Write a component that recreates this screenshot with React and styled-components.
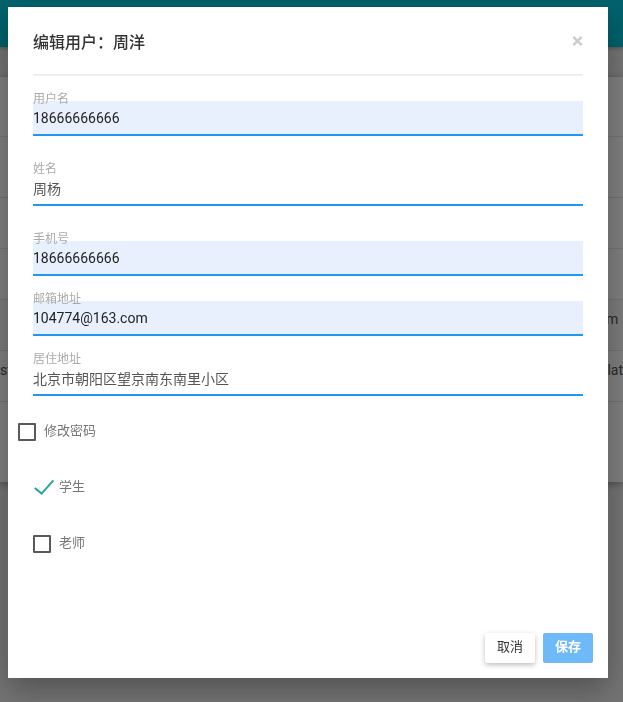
import React, { useState } from "react";
import styled, { createGlobalStyle } from "styled-components";

const GlobalStyle = createGlobalStyle`
  *, *::before, *::after { box-sizing: border-box; }
  body {
    margin: 0;
    font-family: Roboto, "Noto Sans CJK SC", sans-serif;
    font-size: 14px;
    color: #555;
  }
  button, input { font: inherit; }
`;

const Page = styled.div`
  min-height: 100vh;
  background: #e9e9e9;
  overflow: hidden;
`;

const TopBar = styled.header`
  height: 47px;
  background: #00c3d8;
  box-shadow: 0 1px 4px rgba(0, 0, 0, 0.3);
`;

const Card = styled.main`
  margin-top: 30px;
  padding-bottom: 80px;
  background: #fff;
  box-shadow: 0 2px 8px rgba(0, 0, 0, 0.35);
`;

const UserTable = styled.table`
  width: 100%;
  table-layout: fixed;
  border-collapse: separate;
  border-spacing: 0;
  color: #555;
`;

const TableRow = styled.tr`
  height: ${(p) => p.$height || 51}px;
  background: ${(p) => (p.$striped ? "#f9f9f9" : "transparent")};
`;

const TableCell = styled.td`
  padding: 0 0 12px;
  overflow: hidden;
  white-space: nowrap;
  text-align: ${(p) => p.$align || "left"};
  border-bottom: 1px solid #e6e6e6;
`;

const EdgeColumn = styled.col`
  width: 17px;
`;

const Backdrop = styled.div`
  position: fixed;
  inset: 0;
  padding: 7px 15px 24px 8px;
  overflow: auto;
  background: rgba(0, 0, 0, 0.5);
`;

const Dialog = styled.form`
  display: flex;
  flex-direction: column;
  min-height: 100%;
  background: #fff;
  box-shadow: 0 12px 30px rgba(0, 0, 0, 0.3);
`;

const DialogHeader = styled.header`
  display: flex;
  align-items: center;
  justify-content: space-between;
  margin: 0 25px;
  height: 69px;
  border-bottom: 2px solid #eee;
`;

const Title = styled.h1`
  margin: 0;
  padding-top: 4px;
  font-size: 16px;
  line-height: 24px;
  font-weight: 500;
  color: #333;
`;

const CloseButton = styled.button`
  display: grid;
  width: 12px;
  height: 12px;
  padding: 0;
  border: 0;
  background: none;
  color: #ccc;
  place-items: center;
`;

const Fields = styled.div`
  display: flex;
  flex-direction: column;
  margin: 15px 25px 0;
`;

const Field = styled.div`
  display: flex;
  flex-direction: column;
  margin-bottom: ${(p) => (p.$compact ? 15 : 25)}px;
`;

const FieldLabel = styled.label`
  z-index: 1;
  height: 10px;
  font-size: 12px;
  line-height: 16px;
  color: #aaa;
`;

const TextInput = styled.input`
  width: 100%;
  height: 35px;
  padding: 0;
  border: 0;
  border-bottom: 2px solid #2196f3;
  border-radius: 0;
  outline: 0;
  background: ${(p) => (p.$filled ? "#e8f0fe" : "transparent")};
  color: ${(p) => (p.$filled ? "#222" : "#555")};
`;

const CheckList = styled.div`
  display: flex;
  flex-direction: column;
  gap: 38px;
  margin-top: 12px;
`;

const CheckLabel = styled.label`
  display: flex;
  align-items: center;
  gap: 8px;
  height: 18px;
  margin-left: ${(p) => (p.$nested ? 25 : 10)}px;
  font-size: 13px;
  color: #757575;
`;

const CheckText = styled.span`
  padding-bottom: 2px;
  line-height: 18px;
`;

const CheckMark = styled.span`
  display: grid;
  width: 18px;
  height: 18px;

  > * { grid-area: 1 / 1; }
`;

const CheckInput = styled.input`
  appearance: none;
  width: 18px;
  height: 18px;
  margin: 0;
  border: 2px solid #5a5a5a;
  border-radius: 1px;

  &:checked { border-color: transparent; }
`;

const Tick = styled.svg`
  width: 22px;
  height: 18px;
  pointer-events: none;
`;

const DialogFooter = styled.footer`
  display: flex;
  justify-content: flex-end;
  gap: 8px;
  margin-top: auto;
  padding: 15px;
`;

const ActionButton = styled.button`
  height: 30px;
  padding: 0 12px 2px;
  border: 0;
  border-radius: 2px;
  font-size: 13px;
  line-height: 28px;
  font-weight: ${(p) => (p.$primary ? 700 : 400)};
  color: ${(p) => (p.$primary ? "#fff" : "#333")};
  background: ${(p) => (p.$primary ? "#6eb9f7" : "#fff")};
  box-shadow: ${(p) => (p.$primary ? "none" : "0 2px 5px rgba(0, 0, 0, 0.26)")};
`;

const tableRows = [
  { height: 60 },
  { height: 61 },
  {},
  {},
  { right: "m", striped: true },
  { left: "st", right: "lat", align: "right" },
];

const fields = [
  { id: "username", label: "用户名", value: "18666666666", filled: true },
  { id: "name", label: "姓名", value: "周杨" },
  { id: "phone", label: "手机号", value: "18666666666", filled: true, compact: true },
  { id: "email", label: "邮箱地址", value: "104774@163.com", filled: true, compact: true },
  { id: "address", label: "居住地址", value: "北京市朝阳区望京南东南里小区", compact: true },
];

function CheckOption({ label, nested, initial = false }) {
  const [checked, setChecked] = useState(initial);
  return (
    <CheckLabel $nested={nested}>
      <CheckMark>
        <CheckInput
          type="checkbox"
          checked={checked}
          onChange={(e) => setChecked(e.target.checked)}
        />
        {checked && (
          <Tick viewBox="0 0 22 18" fill="none" stroke="#26a69a" strokeWidth="2" aria-hidden="true">
            <path d="M1.8 9L8.6 14.6L20.4 1.4" />
          </Tick>
        )}
      </CheckMark>
      <CheckText>{label}</CheckText>
    </CheckLabel>
  );
}

export default function App() {
  return (
    <>
      <GlobalStyle />
      <Page>
        <TopBar />
        <Card>
          <UserTable>
            <colgroup>
              <EdgeColumn />
              <col />
              <EdgeColumn />
            </colgroup>
            <tbody>
              {tableRows.map((row, i) => (
                <TableRow key={i} $height={row.height} $striped={row.striped}>
                  <TableCell>{row.left}</TableCell>
                  <TableCell />
                  <TableCell $align={row.align}>{row.right}</TableCell>
                </TableRow>
              ))}
            </tbody>
          </UserTable>
        </Card>
      </Page>
      <Backdrop>
        <Dialog role="dialog" aria-labelledby="dialog-title" onSubmit={(e) => e.preventDefault()}>
          <DialogHeader>
            <Title id="dialog-title">编辑用户：周洋</Title>
            <CloseButton type="button" aria-label="关闭">
              <svg width="12" height="12" viewBox="0 0 12 12" stroke="currentColor" strokeWidth="2.4">
                <path d="M2.3 1.8L10.7 10.2M10.7 1.8L2.3 10.2" />
              </svg>
            </CloseButton>
          </DialogHeader>
          <Fields>
            {fields.map((f) => (
              <Field key={f.id} $compact={f.compact}>
                <FieldLabel htmlFor={f.id}>{f.label}</FieldLabel>
                <TextInput id={f.id} defaultValue={f.value} $filled={f.filled} />
              </Field>
            ))}
          </Fields>
          <CheckList>
            <CheckOption label="修改密码" />
            <CheckOption label="学生" nested initial />
            <CheckOption label="老师" nested />
          </CheckList>
          <DialogFooter>
            <ActionButton type="button">取消</ActionButton>
            <ActionButton type="submit" $primary>保存</ActionButton>
          </DialogFooter>
        </Dialog>
      </Backdrop>
    </>
  );
}
